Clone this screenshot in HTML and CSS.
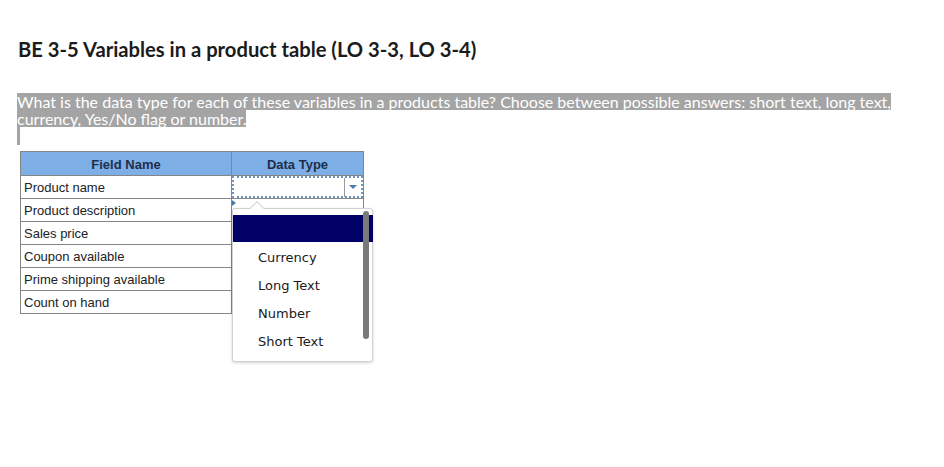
FILE: index.html
```html
<!DOCTYPE html>
<html>
<head>
<meta charset="utf-8">
<link rel="stylesheet" href="styles.css">
</head>
<body>
<div class="page">
  <h1 class="title">BE 3-5 Variables in a product table (LO 3-3, LO 3-4)</h1>
  <div class="question">
    <div class="sel">What is the data type for each of these variables in a products table? Choose between possible answers: short text, long text,</div>
    <div class="sel">currency, Yes/No flag or number.</div>
    <div class="sel-empty"></div>
  </div>
  <div class="table-wrap">
    <table class="grid">
      <thead>
        <tr><th class="c1">Field Name</th><th class="c2">Data Type</th></tr>
      </thead>
      <tbody>
        <tr><td class="c1">Product name</td><td class="c2 focus"><div class="select"><span class="arrow"></span></div></td></tr>
        <tr><td class="c1">Product description</td><td class="c2"><span class="mini"></span></td></tr>
        <tr><td class="c1">Sales price</td><td class="c2"></td></tr>
        <tr><td class="c1">Coupon available</td><td class="c2"></td></tr>
        <tr><td class="c1">Prime shipping available</td><td class="c2"></td></tr>
        <tr><td class="c1">Count on hand</td><td class="c2"></td></tr>
      </tbody>
    </table>
    <div class="popup">
      <span class="notch"></span>
      <ul class="options">
        <li class="opt active">&nbsp;</li>
        <li class="opt">Currency</li>
        <li class="opt">Long Text</li>
        <li class="opt">Number</li>
        <li class="opt">Short Text</li>
      </ul>
      <span class="scroll"></span>
    </div>
  </div>
</div>
</body>
</html>
```

FILE: styles.css
```css
html, body {
  margin: 0;
  padding: 0;
  background: #ffffff;
}

body {
  min-height: 467px;
}

.page {
  padding: 38px 0 0 18px;
  font-family: Lato, "Open Sans", sans-serif;
}

.title {
  margin: 0;
  font-size: 20.2px;
  line-height: 22px;
  font-weight: 700;
  color: #1b1b1b;
  letter-spacing: 0;
}

.question {
  display: flex;
  flex-direction: column;
  align-items: flex-start;
  margin: 33px 0 0 -1px;
  font-size: 16px;
  line-height: 17px;
  color: #ffffff;
  font-weight: 400;
}

.sel {
  background: #a4a4a4;
  height: 17px;
  white-space: nowrap;
  overflow: visible;
}

.sel-empty {
  width: 3px;
  height: 18px;
  background: #a4a4a4;
}

.table-wrap {
  position: relative;
  margin: 6px 0 0 2px;
  width: 360px;
}

.grid {
  border-collapse: collapse;
  font-family: "Liberation Sans", Arial, sans-serif;
  font-size: 13px;
  color: #222;
}

.grid th, .grid td {
  border: 1px solid #858585;
  height: 23px;
  padding: 0 3px;
  box-sizing: border-box;
}

.grid th {
  background: #7eaee6;
  color: #1c2f4a;
  font-weight: 700;
  text-align: center;
  font-size: 13px;
  height: 24px;
  padding-top: 1px;
}

.grid td {
  text-align: left;
}

.c1 { width: 211px; }
.c2 { width: 132px; }

.grid td.focus {
  padding: 0;
  border-top-color: #7eaee6;
}

.select {
  position: relative;
  height: 22px;
  outline: 2px dotted #6d93bd;
  outline-offset: -2px;
}

.select::before {
  content: "";
  position: absolute;
  right: 18px;
  top: 2px;
  bottom: 1px;
  border-left: 1px solid #9a9a9a;
}

.arrow {
  position: absolute;
  right: 6px;
  top: 9px;
  width: 0;
  height: 0;
  border-left: 4px solid transparent;
  border-right: 4px solid transparent;
  border-top: 4px solid #4b7aab;
}

.grid td.c2 {
  position: relative;
}

.mini {
  position: absolute;
  left: 0;
  top: 1px;
  width: 0;
  height: 0;
  border-top: 3px solid transparent;
  border-bottom: 3px solid transparent;
  border-left: 4px solid #4b7aab;
}

.popup {
  position: absolute;
  left: 212px;
  top: 57px;
  width: 139px;
  height: 152px;
  background: #ffffff;
  border: 1px solid #d2d2d2;
  border-radius: 3px;
  box-shadow: 0 1px 3px rgba(0,0,0,0.18);
  font-family: "DejaVu Sans", Verdana, sans-serif;
  font-size: 13px;
  color: #1a1a1a;
}

.notch {
  position: absolute;
  left: 19px;
  top: -6px;
  width: 9px;
  height: 9px;
  background: #fff;
  border-left: 1px solid #d2d2d2;
  border-top: 1px solid #d2d2d2;
  transform: rotate(45deg);
}

.options {
  list-style: none;
  margin: 6px 0 0 0;
  padding: 0;
  position: relative;
}

.opt {
  height: 28px;
  line-height: 32px;
  padding-left: 25px;
  white-space: nowrap;
}

.opt.active {
  height: 27px;
  line-height: 27px;
  background: #000066;
  margin-right: -1px;
}

.scroll {
  position: absolute;
  right: 3px;
  top: 2px;
  width: 6px;
  height: 128px;
  border-radius: 3px;
  background: #7a7a7a;
}
```
